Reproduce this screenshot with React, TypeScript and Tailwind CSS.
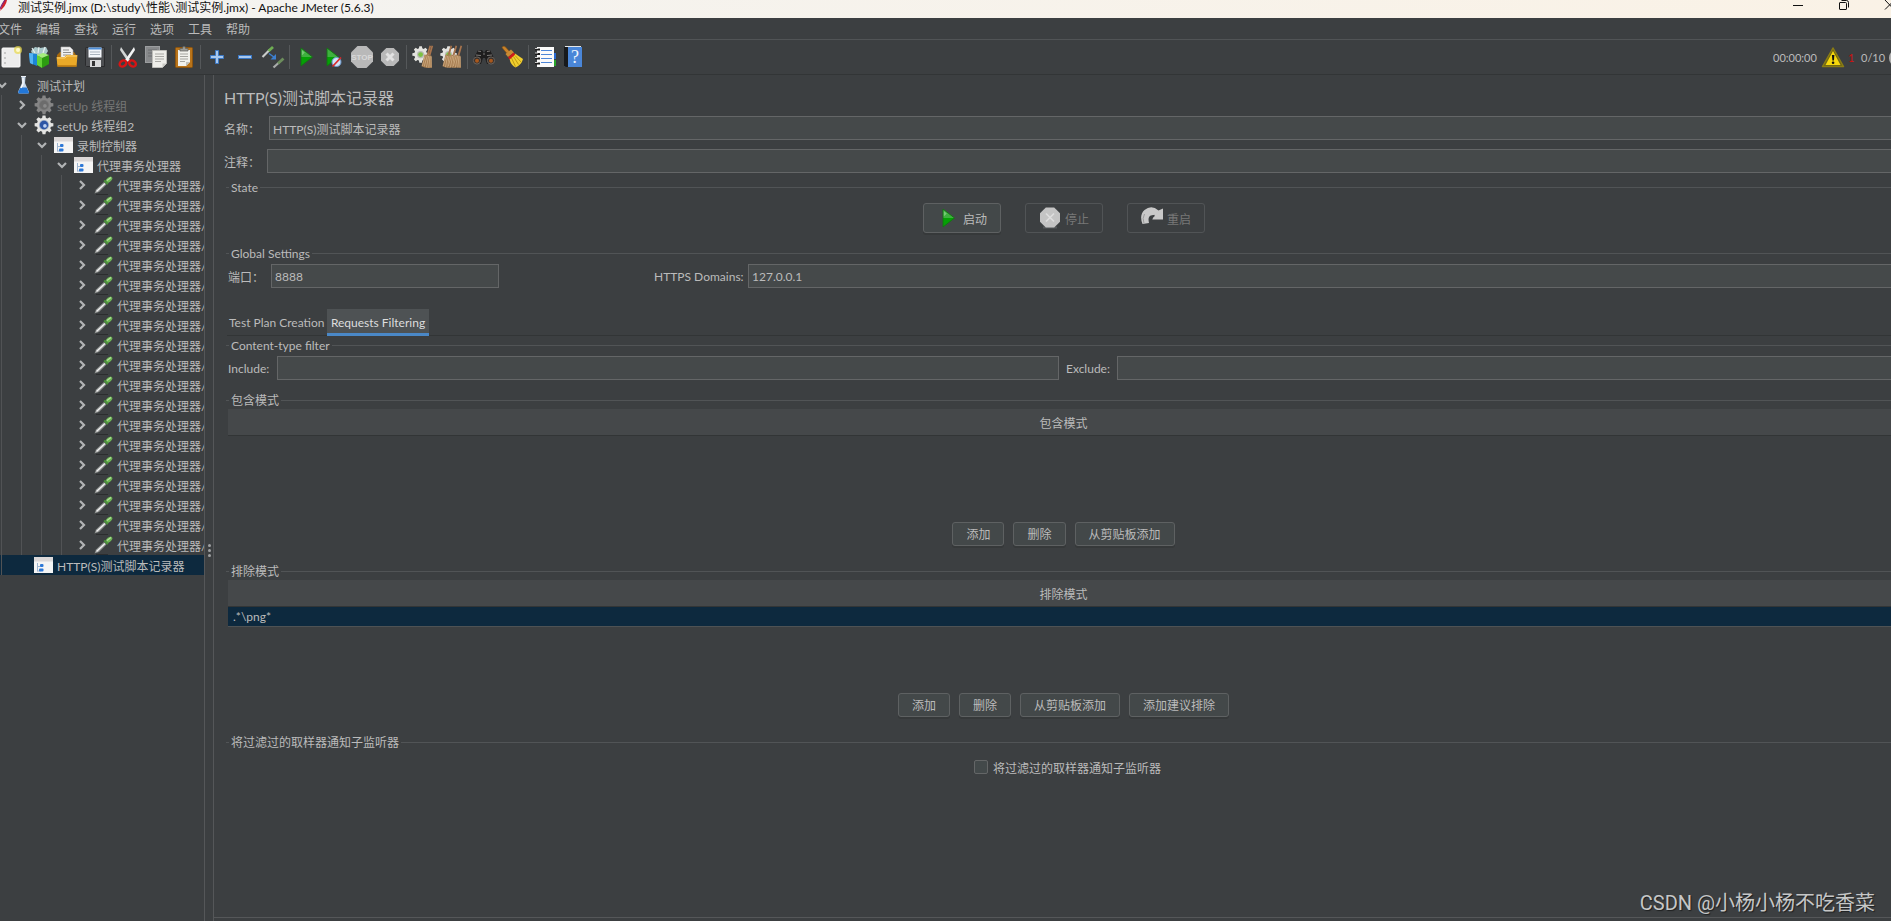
import React, { useState } from "react";

const toolIcon = "h-6 w-6 shrink-0";

function NewIcon() {
  return (
    <svg viewBox="0 0 24 24" className={toolIcon} aria-hidden="true">
      <rect x="3" y="3" width="18" height="19" rx="1" fill="#ededed" stroke="#fafafa" />
      <circle cx="6" cy="8" r=".8" fill="#999" />
      <circle cx="6" cy="13" r=".8" fill="#999" />
      <circle cx="6" cy="18" r=".8" fill="#999" />
      <circle cx="19" cy="5" r="4" fill="#e8d94a" opacity=".7" />
      <circle cx="19" cy="5" r="2" fill="#fffbd0" />
    </svg>
  );
}

function TemplatesIcon() {
  return (
    <svg viewBox="0 0 24 24" className={toolIcon} aria-hidden="true">
      <path d="M4 6l4-4 5 1 6-1 2 4-3 5H6z" fill="#a9c7c9" />
      <path d="M5 3l3 5M12 2l-1 6M18 2l-2 6" stroke="#e6f0f0" strokeWidth="1.2" />
      <path d="M2 8l8 1v12l-7-3z" fill="#1c86d6" />
      <path d="M2 8l4 .5v11L3 18z" fill="#55b4f2" />
      <path d="M10 10l5 3v10l-5-3z" fill="#63d336" />
      <path d="M15 13l7-3v9l-7 4z" fill="#2c9c10" />
      <path d="M10 10l6-2 6 2-7 3z" fill="#a4ef7c" />
    </svg>
  );
}

function OpenIcon() {
  return (
    <svg viewBox="0 0 24 24" className={toolIcon} aria-hidden="true">
      <path d="M2 10l3-3h14l2 3v9H2z" fill="#a86a0c" />
      <path d="M6 2h9l3 3v8H6z" fill="#f1f1f1" stroke="#b7b7b7" strokeWidth=".6" />
      <path d="M8 5h6M8 7.500h8M8 10h8" stroke="#8e8e8e" />
      <path d="M1.500 12h8l2-2h11l-1 11.500h-19z" fill="#eaa928" />
      <path d="M2 13h8l2-2h10" stroke="#f9d277" fill="none" />
      <path d="M2.500 21h19" stroke="#b9770f" strokeWidth="1.500" />
    </svg>
  );
}

function SaveIcon() {
  return (
    <svg viewBox="0 0 24 24" className={toolIcon} aria-hidden="true">
      <path d="M2.500 3.500q0-1 1-1h17q1 0 1 1v18h-18l-1-1z" fill="#4d4f52" stroke="#2a2b2d" />
      <rect x="5.500" y="2.500" width="13" height="10" fill="#f4f7fb" />
      <path d="M5.500 3.500h13" stroke="#4e8fd8" strokeWidth="2" />
      <path d="M7 7h10M7 9.500h10" stroke="#a9b3bd" />
      <rect x="7" y="15" width="11" height="7" fill="#d9dadb" />
      <rect x="9" y="16" width="3" height="5" fill="#333" />
    </svg>
  );
}

function CutIcon() {
  return (
    <svg viewBox="0 0 24 24" className={toolIcon} aria-hidden="true">
      <path d="M5 2l9 13-2 2L4 5z" fill="#d3d6d6" />
      <path d="M18 2L9 15l2 2L19 5z" fill="#f3f4f4" />
      <ellipse cx="7" cy="18.500" rx="3.600" ry="2.800" transform="rotate(-35 7 18.500)" fill="none" stroke="#d81414" strokeWidth="2.400" />
      <ellipse cx="16.500" cy="18.500" rx="3.600" ry="2.800" transform="rotate(35 16.500 18.500)" fill="none" stroke="#d81414" strokeWidth="2.400" />
    </svg>
  );
}

function CopyIcon() {
  return (
    <svg viewBox="0 0 24 24" className={toolIcon} aria-hidden="true">
      <rect x="1.500" y="1.500" width="14" height="16" fill="#87898b" stroke="#9b9d9f" />
      <path d="M4 5h9M4 8h5M4 11h5" stroke="#6b6d6f" />
      <path d="M8.500 5.500h14v13l-4 4h-10z" fill="#eeeeea" stroke="#bdbdb9" />
      <path d="M11 9h9M11 11.500h9M11 14h9M11 16.500h6" stroke="#a8a8a4" />
      <path d="M18.500 22.500v-4h4z" fill="#c8c8c4" />
    </svg>
  );
}

function PasteIcon() {
  return (
    <svg viewBox="0 0 24 24" className={toolIcon} aria-hidden="true">
      <rect x="3.500" y="2.500" width="17" height="20" rx="1" fill="#b9741a" stroke="#8b5410" />
      <path d="M6 5h12v12l-4 4H6z" fill="#f1f1ec" />
      <path d="M8 9h8M8 11.500h8M8 14h8M8 16.500h5" stroke="#a5a5a0" />
      <path d="M14 21v-4h4z" fill="#c1c1bb" />
      <path d="M8 6V3.500h2.500l.5-2h2l.5 2H16V6z" fill="#9a9c98" stroke="#5e605d" strokeWidth=".7" />
    </svg>
  );
}

function PlusIcon() {
  return (
    <svg viewBox="0 0 24 24" className={toolIcon} aria-hidden="true">
      <path d="M10.500 5.500h3v5h5v3h-5v5h-3v-5h-5v-3h5z" fill="#a8c8ee" stroke="#3b78c4" />
    </svg>
  );
}

function MinusIcon() {
  return (
    <svg viewBox="0 0 24 24" className={toolIcon} aria-hidden="true">
      <rect x="5.500" y="10.500" width="13" height="3" fill="#a8c8ee" stroke="#3b78c4" />
    </svg>
  );
}

function ToggleIcon() {
  return (
    <svg viewBox="0 0 24 24" className={toolIcon} aria-hidden="true">
      <path d="M1.500 12L9 4.500" stroke="#c9cccb" strokeWidth="2.200" />
      <path d="M7.500 6L12 2" stroke="#6fae53" strokeWidth="2.800" />
      <path d="M12.500 22.500L18 17.500" stroke="#a9acab" strokeWidth="2.200" />
      <path d="M17 18.500l5.500-5" stroke="#6c8d5c" strokeWidth="2.800" />
      <path d="M8 8.500l5.500 4" stroke="#3d7fd0" strokeWidth="1.500" />
      <path d="M15 9v5.500h-5.500z" fill="#3d7fd0" />
    </svg>
  );
}

function PlayIcon() {
  return (
    <svg viewBox="0 0 24 24" className={toolIcon} aria-hidden="true">
      <path d="M7 3l11.500 9H7z" fill="#3fb03f" />
      <path d="M7 12h11.500L7 21z" fill="#05a005" />
      <path d="M7 3l11.500 9L7 21z" fill="none" stroke="#137413" strokeWidth=".9" />
      <path d="M7.800 5l3 2.500-3 3z" fill="#8bd48b" opacity=".7" />
    </svg>
  );
}

function PlayNoTimersIcon() {
  return (
    <svg viewBox="0 0 24 24" className={toolIcon} aria-hidden="true">
      <path d="M5 3l11.500 9H5z" fill="#3fb03f" />
      <path d="M5 12h11.500L5 21z" fill="#05a005" />
      <path d="M5 3l11.500 9L5 21z" fill="none" stroke="#137413" strokeWidth=".9" />
      <circle cx="14.500" cy="17" r="4.500" fill="#cfe2f7" stroke="#6d9bd0" />
      <path d="M10.500 21.500l8.500-9" stroke="#d92b2b" strokeWidth="1.800" />
    </svg>
  );
}

function StopIcon() {
  return (
    <svg viewBox="0 0 24 24" className={toolIcon} aria-hidden="true">
      <path d="M7.500 1h9L23 7.500v9L16.500 23h-9L1 16.500v-9z" fill="#b9b9b9" />
      <text x="12" y="15" textAnchor="middle" className="text-[8px] font-bold" fill="#d8d8d8" fontFamily="Liberation Sans, sans-serif">
        STOP
      </text>
    </svg>
  );
}

function ShutdownIcon() {
  return (
    <svg viewBox="0 0 24 24" className={toolIcon} aria-hidden="true">
      <path d="M8.300 3h7.400L21 8.300v7.400L15.700 21H8.300L3 15.700V8.300z" fill="#b9b9b9" />
      <path d="M8.500 8.500l7 7M15.500 8.500l-7 7" stroke="#e2e2e2" strokeWidth="3" />
    </svg>
  );
}

function RecorderStopIcon() {
  return (
    <svg viewBox="0 0 24 24" className={toolIcon} aria-hidden="true">
      <path d="M5 21.500h14" stroke="#55585a" strokeWidth="2" />
      <path d="M7.800 1.500h8.400L22 7.300v8.400l-5.800 5.800H7.800L2 15.700V7.300z" fill="#c4c4c4" />
      <path d="M8 7.500l8 8M16 7.500l-8 8" stroke="#dedede" strokeWidth="1.600" />
    </svg>
  );
}

function GearShape({ fill }: { fill: string }) {
  return (
    <path
      d="M10.400 1.500h3.200l.5 2.700 1.700.7 2.300-1.500 2.300 2.300-1.500 2.300.7 1.700 2.700.5v3.200l-2.700.5-.7 1.700 1.500 2.300-2.300 2.300-2.300-1.500-1.700.7-.5 2.700h-3.200l-.5-2.700-1.700-.7-2.300 1.500-2.300-2.300 1.500-2.300-.7-1.700-2.700-.5v-3.200l2.700-.5.7-1.700-1.500-2.300 2.300-2.300 2.300 1.500 1.700-.7z"
      fill={fill}
    />
  );
}

function ToolGear() {
  return (
    <g transform="scale(.8)">
      <GearShape fill="#e3e3df" />
      <circle cx="12" cy="12" r="4.500" fill="#b9bbb5" />
      <circle cx="12" cy="12" r="3" fill="#7cc142" />
    </g>
  );
}

function BroomHead({ x }: { x: number }) {
  return (
    <g transform={`translate(${x} 0)`}>
      <path d="M15.500.500l1.600.5-2.600 9.500-1.900-.6z" fill="#a8744d" />
      <path d="M10.500 9.500l5 1.200.5 12q-5 .5-8.500-1.500z" fill="#a67c50" />
      <path d="M11.300 10.500L8.300 21M12.600 11L10.500 22M14 11.200L12.800 22.500M15.200 11.500l-.2 11" stroke="#d9b88e" strokeWidth=".7" />
    </g>
  );
}

function ClearIcon() {
  return (
    <svg viewBox="0 0 24 24" className={toolIcon} aria-hidden="true">
      <ToolGear />
      <BroomHead x={3} />
      <BroomHead x={5} />
    </svg>
  );
}

function ClearAllIcon() {
  return (
    <svg viewBox="0 0 24 24" className={toolIcon} aria-hidden="true">
      <ToolGear />
      <BroomHead x={-4} />
      <BroomHead x={1} />
      <BroomHead x={6} />
    </svg>
  );
}

function SearchIcon() {
  return (
    <svg viewBox="0 0 24 24" className={toolIcon} aria-hidden="true">
      <path d="M6 5h4l2 3 2-3h4l5 10-3 4h-5l-2-6h-2l-2 6H4l-3-4z" fill="#1e1d1d" />
      <path d="M6 6l3 .5M15 6.500l3-.5M4 10l5 .5M15 10.500l5-.5M11 9h2" stroke="#7d7a78" strokeWidth="1.200" />
      <circle cx="5" cy="15.500" r="3.600" fill="#37302c" stroke="#6b645f" />
      <circle cx="19" cy="15.500" r="3.600" fill="#37302c" stroke="#6b645f" />
      <circle cx="5" cy="15.800" r="2" fill="#a8581e" />
      <circle cx="19" cy="15.800" r="2" fill="#a8581e" />
    </svg>
  );
}

function ResetSearchIcon() {
  return (
    <svg viewBox="0 0 24 24" className={toolIcon} aria-hidden="true">
      <path d="M2 2.500q1.500-2 3.500-.5l4 4.500-2.500 2z" fill="#c9822a" stroke="#8c5510" strokeWidth=".6" />
      <path d="M5.500 9L11 4.500l3 3L8 12z" fill="#c98a34" />
      <path d="M9.500 13.500L15 8.500l8 5.500q-1.500 6-7.500 8.500-5-2.500-6-9z" fill="#f1cf2e" />
      <path d="M11.500 13l4 8.500M13.500 11.500l5 8M15 10.500l6 6.500" stroke="#b8930d" strokeWidth=".9" />
      <path d="M8 12.500l5.500-5 1.700 2-5.500 5z" fill="#d21a1a" />
    </svg>
  );
}

function FunctionsIcon() {
  return (
    <svg viewBox="0 0 24 24" className={toolIcon} aria-hidden="true">
      <path d="M20 8h3v6h-3z" fill="#2a6ad0" />
      <path d="M20 15h3v6h-3z" fill="#27a32b" />
      <rect x="4" y="2" width="17" height="20" fill="#fbfbfb" />
      <path d="M8 5.500h11M8 9.500h11M8 13.500h11M8 17.500h11" stroke="#4d86d8" strokeWidth="1.200" />
      <path d="M2 4.500h5M2 9h5M2 13.500h5M2 18.500h5" stroke="#1c1c1c" strokeWidth="1.800" />
      <path d="M2 3.500h3M2 8h3M2 12.500h3M2 17.500h3" stroke="#ddd" strokeWidth=".9" />
    </svg>
  );
}

function HelpIcon() {
  return (
    <svg viewBox="0 0 24 24" className={toolIcon} aria-hidden="true">
      <path d="M3 2h18v20H4.500L3 20.500z" fill="#4a86d8" />
      <path d="M3 2h4v20H4.500L3 20.500z" fill="#17191c" />
      <path d="M4 1.500h16" stroke="#e4e6e8" />
      <text x="14" y="18" textAnchor="middle" className="text-[18px]" fill="#eef4fd" fontFamily="Liberation Serif, serif">
        ?
      </text>
    </svg>
  );
}

function RestartIcon() {
  return (
    <svg viewBox="0 0 24 24" className={toolIcon} aria-hidden="true">
      <path d="M2.500 18Q-1 9 4.500 4q7-5.500 14 .5L23 2.500V13.500H12l2.500-4Q9 8 8.500 13q0 2 .5 4z" fill="#c9c9c9" />
      <path d="M4 17.500Q2 12 4.500 8" stroke="#9b9b9b" fill="none" />
      <path d="M11.500 14q-.5-3.500 3-4.500" stroke="#3c3f41" strokeWidth="1.600" fill="none" />
    </svg>
  );
}

function WarningIcon() {
  return (
    <svg viewBox="0 0 24 24" className={toolIcon} aria-hidden="true">
      <path d="M12 2L22.500 20.500H1.500z" fill="#6e6414" stroke="#8a7c14" strokeWidth="1.500" strokeLinejoin="round" />
      <path d="M12 5l7.500 14h-15z" fill="#f6d80c" />
      <path d="M10.900 9h2.500l-.5 5.500h-1.500z" fill="#111" />
      <circle cx="12.100" cy="16.700" r="1.300" fill="#111" />
    </svg>
  );
}

/* Tree icons */
function FlaskIcon() {
  return (
    <svg viewBox="0 0 20 20" className="h-5 w-5 shrink-0" aria-hidden="true">
      <path d="M7.500 2h4l-.5 6 4 9q.2 1.500-1.500 1.500h-8Q4 18.500 4 17l4-9z" fill="#c7d7e8" />
      <path d="M6.500 12.500h6.200l2.300 5q0 1-1.500 1h-8q-1.500 0-1.300-1.500z" fill="#2277d8" />
      <path d="M9 3v6l-2 4" stroke="#fff" strokeWidth="1.200" fill="none" />
      <path d="M7 1.500h5" stroke="#e9eef4" />
    </svg>
  );
}

function GearIcon({ disabled = false }: { disabled?: boolean }) {
  return (
    <svg viewBox="1 1 22 22" className="h-5 w-5 shrink-0" aria-hidden="true">
      <GearShape fill={disabled ? "#858585" : "#e4e4e2"} />
      <circle cx="12" cy="12" r="5.600" fill={disabled ? "#777" : "#9dabc2"} />
      <circle cx="12" cy="12" r="4.600" fill={disabled ? "#6c6c6c" : "#2d55a5"} />
      <circle cx="13" cy="13" r="2" fill={disabled ? "#8a8a8a" : "#bcd0f2"} />
    </svg>
  );
}

function ControllerIcon() {
  return (
    <svg viewBox="0 0 20 20" className="h-5 w-5 shrink-0" aria-hidden="true">
      <rect x="0" y="2" width="19" height="16" fill="#f5f5f5" />
      <rect x="0" y="2" width="19" height="4.500" fill="#dcd8d8" />
      <path d="M3.500 8v8.500M3.500 11.500h3M3.500 16h3" stroke="#9db4d0" fill="none" />
      <rect x="6" y="9" width="3.500" height="3" rx="1" fill="#2e78d6" />
      <rect x="5" y="13.500" width="4.500" height="3" rx="1" fill="#2e78d6" />
    </svg>
  );
}

function PipetteIcon() {
  return (
    <svg viewBox="0 0 20 20" className="h-5 w-5 shrink-0" aria-hidden="true">
      <path d="M2 19.500h12" stroke="#2b2d2e" />
      <path d="M.500 18.500l1.500-4L10 7l2.500 2.500L5 17z" fill="#8d908f" />
      <path d="M2.500 16.500l8.500-8" stroke="#f0f0f0" strokeWidth="1.500" />
      <path d="M9.500 6l1.300-1 3.700 3.500-1.300 1.300z" fill="#4c9639" />
      <path d="M11.500 5.500q2-3.500 5.500-4l1.500 1.500q-.5 3-4.500 5z" fill="#6db654" />
      <path d="M13 5.500l4-3" stroke="#b4e39f" strokeWidth="1.100" />
    </svg>
  );
}

function Caret({ open }: { open: boolean }) {
  return (
    <svg viewBox="0 0 14 20" className="h-5 w-3.5 shrink-0 overflow-visible" aria-hidden="true">
      <path d={open ? "M-2 8l4 4 4-4" : "M0 6l4 4-4 4"} fill="none" stroke="#b2b4b5" strokeWidth="2.200" />
    </svg>
  );
}

type NodeKind = "plan" | "gear" | "gearOff" | "controller" | "sampler";
type TreeNode = { depth: number; kind: NodeKind; label: string; caret?: "open" | "closed"; selected?: boolean };

const nodes: TreeNode[] = [
  { depth: 0, kind: "plan", label: "测试计划", caret: "open" },
  { depth: 1, kind: "gearOff", label: "setUp 线程组", caret: "closed" },
  { depth: 1, kind: "gear", label: "setUp 线程组2", caret: "open" },
  { depth: 2, kind: "controller", label: "录制控制器", caret: "open" },
  { depth: 3, kind: "controller", label: "代理事务处理器", caret: "open" },
  ...Array.from({ length: 19 }, (): TreeNode => ({ depth: 4, kind: "sampler", label: "代理事务处理器/", caret: "closed" })),
  { depth: 1, kind: "controller", label: "HTTP(S)测试脚本记录器", selected: true },
];

function NodeIcon({ kind }: { kind: NodeKind }) {
  if (kind === "plan") return <FlaskIcon />;
  if (kind === "gear") return <GearIcon />;
  if (kind === "gearOff") return <GearIcon disabled />;
  if (kind === "controller") return <ControllerIcon />;
  return <PipetteIcon />;
}

function Tree() {
  return (
    <nav aria-label="测试计划" className="w-[205px] shrink-0 overflow-hidden border-r border-[#555759]">
      <ul>
        {nodes.map((n, i) => (
          <li
            key={i}
            className={`flex h-5 items-center whitespace-nowrap ${n.selected ? "bg-[#0d293e]" : ""} ${
              n.kind === "gearOff" ? "text-[#777]" : ""
            }`}
          >
            {Array.from({ length: n.depth }, (_, k) => (
              <span key={k} className="flex h-5 w-5 shrink-0 pl-px">
                <span className="w-px bg-[#515355]" />
              </span>
            ))}
            {n.caret ? <Caret open={n.caret === "open"} /> : <span className="w-3.5 shrink-0" />}
            <NodeIcon kind={n.kind} />
            <span className="pt-[3px] pl-[3px]">{n.label}</span>
          </li>
        ))}
      </ul>
    </nav>
  );
}

const tools: { label: string; icon: () => React.ReactElement }[][] = [
  [
    { label: "新建", icon: NewIcon },
    { label: "模板", icon: TemplatesIcon },
    { label: "打开", icon: OpenIcon },
    { label: "保存", icon: SaveIcon },
  ],
  [
    { label: "剪切", icon: CutIcon },
    { label: "复制", icon: CopyIcon },
    { label: "粘贴", icon: PasteIcon },
  ],
  [
    { label: "展开", icon: PlusIcon },
    { label: "折叠", icon: MinusIcon },
    { label: "切换", icon: ToggleIcon },
  ],
  [
    { label: "启动", icon: PlayIcon },
    { label: "不停顿开始", icon: PlayNoTimersIcon },
    { label: "停止", icon: StopIcon },
    { label: "关闭", icon: ShutdownIcon },
  ],
  [
    { label: "清除", icon: ClearIcon },
    { label: "清除全部", icon: ClearAllIcon },
  ],
  [
    { label: "搜索", icon: SearchIcon },
    { label: "重置搜索", icon: ResetSearchIcon },
  ],
  [
    { label: "函数助手", icon: FunctionsIcon },
    { label: "帮助", icon: HelpIcon },
  ],
];

function Toolbar() {
  return (
    <div className="flex h-[35px] shrink-0 items-center justify-between border-b border-[#323536]">
      <div role="toolbar" className="-ml-[3px] flex items-center">
        {tools.map((group, g) => (
          <React.Fragment key={g}>
            {g > 0 && <span className="mx-0.5 h-6 w-px bg-[#55585a]" />}
            {group.map(({ label, icon: Icon }) => (
              <button key={label} type="button" aria-label={label} className="flex h-7 w-7 items-center justify-center">
                <Icon />
              </button>
            ))}
          </React.Fragment>
        ))}
      </div>
      <div className="-mr-4 flex shrink-0 items-center pt-px text-[11px]">
        <span className="w-12">00:00:00</span>
        <WarningIcon />
        <span className="w-4 pl-[3px] text-[#d01010]">1</span>
        <span className="w-7">0/10</span>
        <span className="h-[18px] w-[18px] rounded-full border-2 border-[#b0b0b0] bg-[#8a8a8a]" />
      </div>
    </div>
  );
}

function TitleBar() {
  return (
    <header className="flex h-[18px] shrink-0 items-start justify-between overflow-hidden bg-linear-to-r from-[#f3f3f1] to-[#faf2e6] text-[#111]">
      <div className="flex h-[15px] items-center">
        <svg viewBox="0 0 18 15" className="h-[15px] w-[18px] shrink-0" aria-hidden="true">
          <path d="M0 11Q2 4 5-1l2 1Q6 6 0 11z" fill="#d2232a" />
          <path d="M0 9q2-5 5-9" stroke="#7b2a7d" strokeWidth="1.200" fill="none" />
        </svg>
        <h1 className="whitespace-nowrap">测试实例.jmx (D:\study\性能\测试实例.jmx) - Apache JMeter (5.6.3)</h1>
      </div>
      <div className="-mr-[22px] flex">
        <button type="button" aria-label="最小化" className="flex h-[18px] w-[46px] justify-center">
          <svg viewBox="0 0 12 18" className="h-[18px] w-3" aria-hidden="true">
            <path d="M1 5.500h10" stroke="#111" />
          </svg>
        </button>
        <button type="button" aria-label="还原" className="flex h-[18px] w-[46px] justify-center">
          <svg viewBox="0 0 12 18" className="h-[18px] w-3" aria-hidden="true">
            <path d="M1.500 3q0-.5.500-.5h5.500q1 0 1 1V9q0 .5-.5.500H2q-.5 0-.5-.5z" fill="none" stroke="#111" />
            <path d="M3.500.500h5q2 0 2 2V7.500" fill="none" stroke="#111" />
          </svg>
        </button>
        <button type="button" aria-label="关闭窗口" className="flex h-[18px] w-[46px] justify-center">
          <svg viewBox="0 0 12 18" className="h-[18px] w-3" aria-hidden="true">
            <path d="M1 0l9 9.500M10.500 0L1 9.500" stroke="#111" fill="none" />
          </svg>
        </button>
      </div>
    </header>
  );
}

const field =
  "h-6 min-w-0 border border-[#646667] bg-[#45494a] px-[3px] pt-px text-[#bbbbbb] outline-none focus:border-[#466d94]";
const button =
  "flex items-center justify-center rounded-[3px] border border-[#5e6162] bg-[#434849] shadow-[0_2px_0_#36393a]";
const disabledButton =
  "flex h-[30px] w-[78px] items-center justify-center gap-[3px] rounded-[3px] border border-[#515456] text-[#777]";

function Legend({ children, className }: { children: React.ReactNode; className: string }) {
  return (
    <div className={`flex h-4 items-center gap-0.5 ${className}`}>
      <span className="h-px w-[3px] bg-[#515456]" />
      <h3 className="whitespace-nowrap pt-px leading-4">{children}</h3>
      <span className="h-px flex-1 bg-[#515456]" />
    </div>
  );
}

function PatternTable({ title, rows }: { title: string; rows: string[] }) {
  return (
    <div className="mt-px ml-0.5 h-[104px]">
      <table className="w-full border-collapse">
        <thead>
          <tr className="h-[26px] border-b border-[#323536] bg-[#45484a]">
            <th className="p-0 pt-1 text-center font-normal">{title}</th>
          </tr>
        </thead>
        <tbody>
          {rows.map((r) => (
            <tr key={r} className="h-5 border-b border-[#4e5254] bg-[#0d293e]">
              <td className="p-0 pt-0.5 pl-[5px] leading-4">{r}</td>
            </tr>
          ))}
        </tbody>
      </table>
    </div>
  );
}

function ButtonRow({ labels }: { labels: string[] }) {
  return (
    <div className="mt-[9px] ml-0.5 flex justify-center gap-[9px]">
      {labels.map((l) => (
        <button key={l} type="button" className={`${button} h-6 px-[13px] pt-0.5`}>
          {l}
        </button>
      ))}
    </div>
  );
}

function Recorder() {
  const [tab, setTab] = useState(1);
  const [notify, setNotify] = useState(false);
  return (
    <main className="flex min-w-0 flex-1 flex-col overflow-hidden border-l border-[#555759]">
      <div className="-mr-2 flex flex-1 flex-col pt-[11px] pl-3">
        <h2 className="-ml-0.5 text-[16px] leading-6">HTTP(S)测试脚本记录器</h2>
        <div className="-ml-0.5 mt-1.5 flex items-center">
          <label htmlFor="name" className="w-[45px] shrink-0 pt-[3px]">名称：</label>
          <input id="name" className={`${field} flex-1`} defaultValue="HTTP(S)测试脚本记录器" />
        </div>
        <div className="-ml-0.5 mt-[9px] flex items-center">
          <label htmlFor="comment" className="w-[43px] shrink-0 pt-[3px]">注释：</label>
          <input id="comment" className={`${field} flex-1`} />
        </div>

        <Legend className="mt-1.5">State</Legend>
        <div className="mt-2 ml-0.5 flex justify-center gap-6">
          <button type="button" className={`${button} h-[30px] w-[78px] gap-[3px]`}>
            <PlayIcon />
            <span className="pt-[3px]">启动</span>
          </button>
          <button type="button" disabled className={disabledButton}>
            <RecorderStopIcon />
            <span className="pt-[3px]">停止</span>
          </button>
          <button type="button" disabled className={disabledButton}>
            <RestartIcon />
            <span className="pt-[3px]">重启</span>
          </button>
        </div>

        <Legend className="mt-3">Global Settings</Legend>
        <div className="mt-[3px] ml-0.5 flex items-center">
          <div className="flex w-[426px] shrink-0 items-center">
            <label htmlFor="port" className="w-[43px] shrink-0 pt-[3px]">端口：</label>
            <input id="port" className={`${field} w-[228px]`} defaultValue="8888" />
          </div>
          <label htmlFor="domains" className="w-[94px] shrink-0 pt-0.5">HTTPS Domains:</label>
          <input id="domains" className={`${field} flex-1`} defaultValue="127.0.0.1" />
        </div>

        <div role="tablist" className="mt-[21px] ml-px flex h-[27px] border-b border-[#323536]">
          {["Test Plan Creation", "Requests Filtering"].map((t, i) => (
            <button
              key={t}
              type="button"
              role="tab"
              aria-selected={tab === i}
              onClick={() => setTab(i)}
              className={`-mb-px flex items-center border-b-[3px] pt-[3px] whitespace-nowrap ${
                tab === i ? "w-[102px] justify-center border-[#4a88c7] bg-[#4e5254] text-[#dddddd]" : "w-[100px] border-transparent pl-0.5"
              }`}
            >
              {t}
            </button>
          ))}
        </div>

        <Legend className="mt-px">Content-type filter</Legend>
        <div className="mt-[3px] ml-0.5 flex items-center">
          <label htmlFor="include" className="w-[49px] shrink-0 pt-0.5">Include:</label>
          <input id="include" className={`${field} flex-1`} />
          <label htmlFor="exclude" className="ml-[7px] w-[51px] shrink-0 pt-0.5">Exclude:</label>
          <input id="exclude" className={`${field} flex-1`} />
        </div>

        <Legend className="mt-3">包含模式</Legend>
        <PatternTable title="包含模式" rows={[]} />
        <ButtonRow labels={["添加", "删除", "从剪贴板添加"]} />

        <Legend className="mt-[17px]">排除模式</Legend>
        <PatternTable title="排除模式" rows={[".*\\png*"]} />
        <ButtonRow labels={["添加", "删除", "从剪贴板添加", "添加建议排除"]} />

        <Legend className="mt-[17px]">将过滤过的取样器通知子监听器</Legend>
        <label className="mt-[9px] flex h-4 items-center justify-center gap-[5px] pl-2.5">
          <input
            type="checkbox"
            checked={notify}
            onChange={(e) => setNotify(e.target.checked)}
            className="h-3.5 w-3.5 appearance-none rounded-[2px] border border-[#646667] bg-[#43494a] checked:bg-[#4a88c7]"
          />
          <span className="pt-[3px]">将过滤过的取样器通知子监听器</span>
        </label>
      </div>
      <div className="h-1 shrink-0 border-t border-[#555759]" />
    </main>
  );
}

export default function App() {
  return (
    <div className="relative flex h-screen flex-col overflow-hidden bg-[#3c3f41] font-['Lato','Noto_Sans_CJK_SC',sans-serif] text-[12px] leading-4 text-[#bbbbbb]">
      <TitleBar />
      <nav aria-label="菜单" className="-ml-[9px] flex h-[22px] shrink-0 items-center border-b border-[#515456]">
        {["文件", "编辑", "查找", "运行", "选项", "工具", "帮助"].map((m) => (
          <button key={m} type="button" className="px-[7px] pt-0.5">
            {m}
          </button>
        ))}
      </nav>
      <Toolbar />
      <div className="flex min-h-0 flex-1">
        <Tree />
        <div className="flex w-2 shrink-0 flex-col items-center justify-center gap-0.5 pt-26">
          <span className="h-[3px] w-[3px] rounded-full bg-[#a0a2a3]" />
          <span className="h-[3px] w-[3px] rounded-full bg-[#a0a2a3]" />
          <span className="h-[3px] w-[3px] rounded-full bg-[#a0a2a3]" />
        </div>
        <Recorder />
      </div>
      <p className="absolute right-4 bottom-1 font-['Roboto','Noto_Sans_CJK_SC',sans-serif] text-[20px] leading-7 text-[#c6c7c7] [text-shadow:1px_1px_1px_#1e1f20]">
        CSDN @小杨小杨不吃香菜
      </p>
    </div>
  );
}
